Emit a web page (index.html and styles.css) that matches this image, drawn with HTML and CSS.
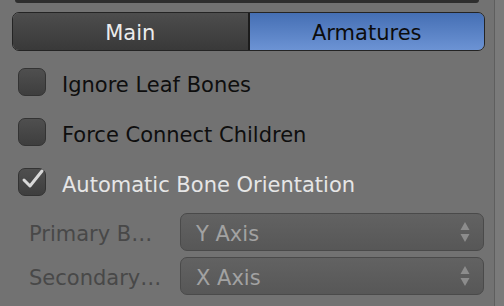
FILE: index.html
```html
<!DOCTYPE html>
<html>
<head>
    <meta charset="UTF-8">
    <title>Armature options</title>
    <link rel="stylesheet" href="styles.css">
</head>
<body>
<div class="page">
    <section class="panel">
        <div class="top-bar"></div>

        <div class="tabs">
            <button class="tab">Main</button>
            <button class="tab active">Armatures</button>
        </div>

        <div class="options">
            <label class="check">
                <span class="box"></span>
                <span class="check-label">Ignore Leaf Bones</span>
            </label>
            <label class="check">
                <span class="box"></span>
                <span class="check-label">Force Connect Children</span>
            </label>
            <label class="check checked">
                <span class="box">
                    <svg width="24" height="22" viewBox="0 0 24 22">
                        <path d="M3 12 L9 18 L21 3" fill="none" stroke="#d8d8d8" stroke-width="3" stroke-linecap="round" stroke-linejoin="round"/>
                    </svg>
                </span>
                <span class="check-label">Automatic Bone Orientation</span>
            </label>
        </div>

        <div class="fields">
            <div class="field">
                <span class="field-label">Primary B…</span>
                <div class="select">
                    <span>Y Axis</span>
                    <svg class="arrows" width="10" height="22" viewBox="0 0 10 22">
                        <path d="M5 1 L9.5 9 L0.5 9 Z M0.5 13 L9.5 13 L5 21 Z" fill="#8c8c8c"/>
                    </svg>
                </div>
            </div>
            <div class="field">
                <span class="field-label">Secondary…</span>
                <div class="select">
                    <span>X Axis</span>
                    <svg class="arrows" width="10" height="22" viewBox="0 0 10 22">
                        <path d="M5 1 L9.5 9 L0.5 9 Z M0.5 13 L9.5 13 L5 21 Z" fill="#8c8c8c"/>
                    </svg>
                </div>
            </div>
        </div>
    </section>
    <div class="scrollbar"></div>
</div>
</body>
</html>
```

FILE: styles.css
```css
html, body {
    height: 100%;
    margin: 0;
}

body {
    background-color: #727272;
    font-family: "DejaVu Sans", "Liberation Sans", sans-serif;
    font-size: 21px;
    overflow: hidden;
}

.page {
    display: flex;
    height: 306px;
}

.panel {
    flex: 1;
    display: flex;
    flex-flow: column;
}

.scrollbar {
    width: 9px;
    border-left: 1px solid #5e5e5e;
    background-color: #7a7a7a;
}

.top-bar {
    height: 3px;
    margin: 0 15px;
    background-color: #2e2e2e;
    border-radius: 0 0 5px 5px;
}

.tabs {
    display: flex;
    height: 39px;
    margin: 9px 9px 0 12px;
    border: 1px solid #242424;
    border-radius: 7px;
    overflow: hidden;
    box-sizing: border-box;
}

.tab {
    flex: 1;
    padding: 3px 0 0;
    margin: 0;
    border: none;
    font-family: inherit;
    font-size: 21px;
    color: #ececec;
    background: linear-gradient(#4d4d4d, #393939);
}

.tab.active {
    color: #0c0c0c;
    border-left: 2px solid #1c1c1c;
    background: linear-gradient(#456fb4, #6c93d4);
}

.options {
    display: flex;
    flex-flow: column;
    gap: 23px;
    margin: 17px 0 0 18px;
}

.check {
    display: flex;
    align-items: center;
    gap: 16px;
    height: 27px;
    color: #0e0e0e;
}

.check-label {
    margin-top: 6px;
}

.check.checked {
    color: #e6e6e6;
}

.box {
    display: flex;
    align-items: center;
    justify-content: center;
    width: 28px;
    height: 28px;
    box-sizing: border-box;
    border: 1px solid #333333;
    border-radius: 7px;
    background: linear-gradient(#4f4f4f, #3e3e3e);
}

.box svg {
    margin: -6px -2px 0 0;
}

.fields {
    display: flex;
    flex-flow: column;
    gap: 6px;
    margin: 18px 10px 0 29px;
}

.field {
    display: flex;
    align-items: center;
    height: 38px;
}

.field-label {
    width: 151px;
    padding-top: 4px;
    color: #484848;
}

.select {
    flex: 1;
    display: flex;
    align-items: center;
    justify-content: space-between;
    height: 38px;
    padding: 3px 13px 0 15px;
    box-sizing: border-box;
    border: 1px solid #4a4a4a;
    border-radius: 7px;
    background: linear-gradient(#626262, #575757);
    color: #a2a2a2;
}

.arrows {
    margin-top: -3px;
}
```
